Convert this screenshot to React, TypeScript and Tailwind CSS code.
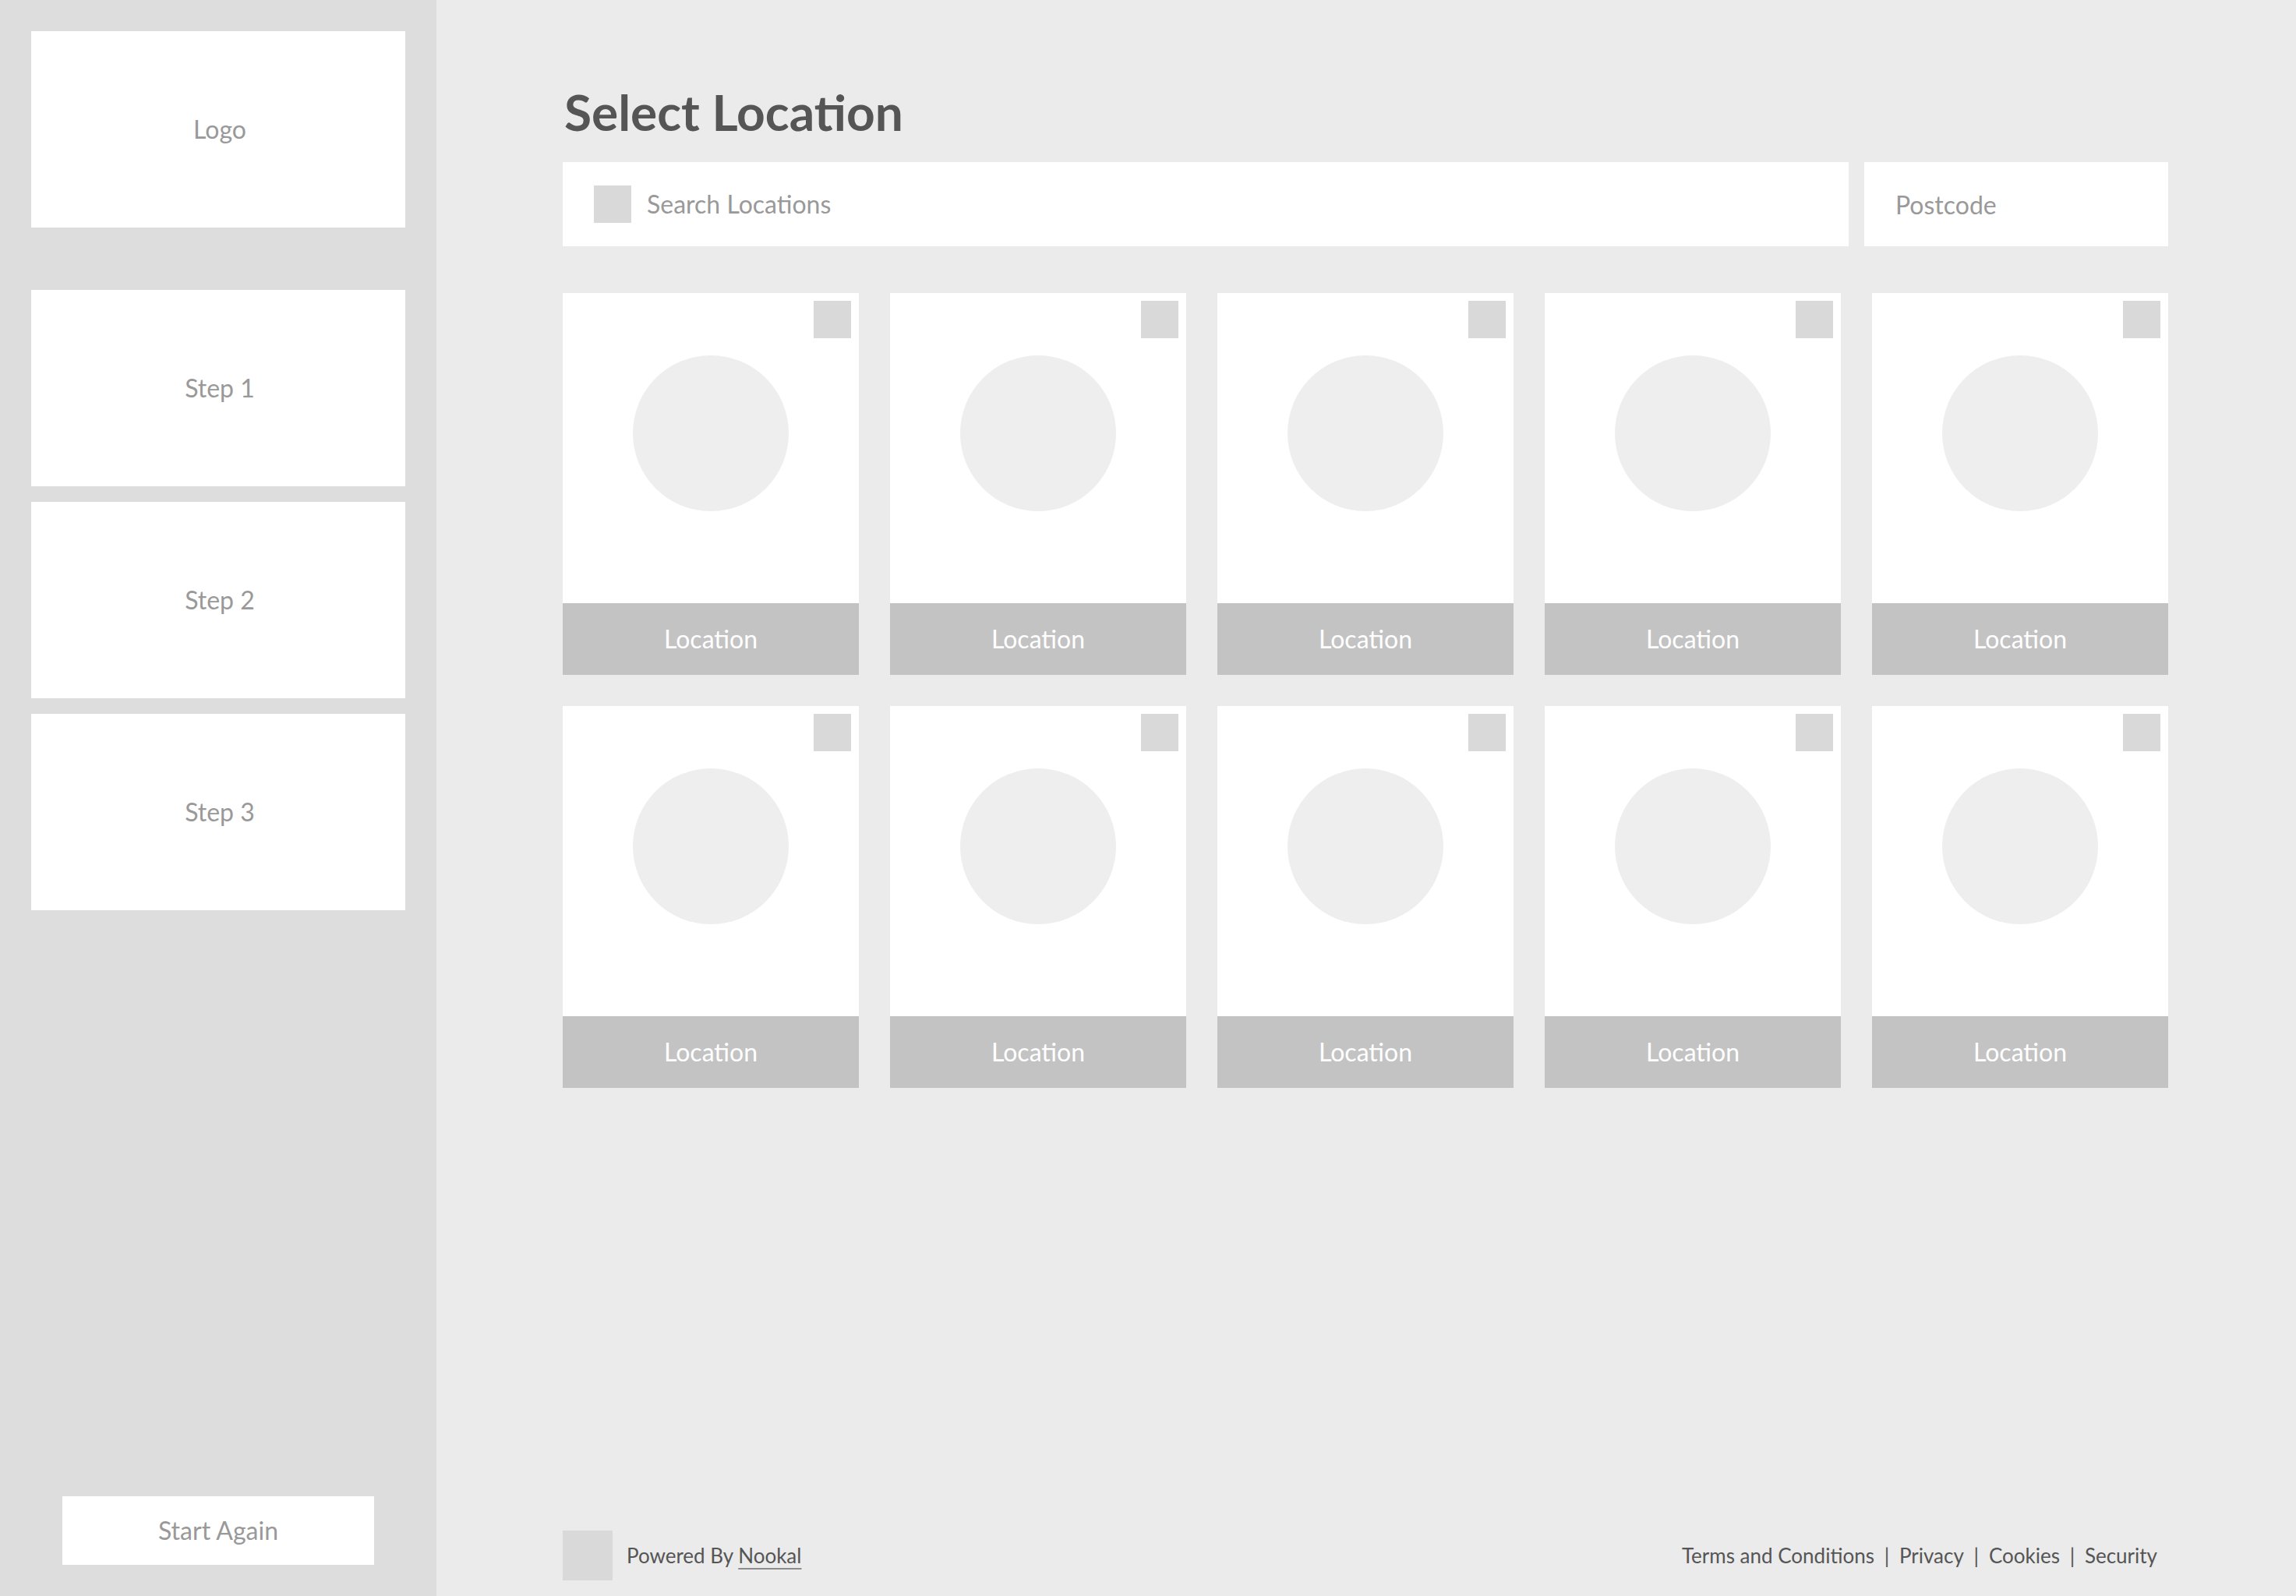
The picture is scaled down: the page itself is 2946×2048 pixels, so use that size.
const steps = ["Step 1", "Step 2", "Step 3"];
const locations = Array.from({ length: 10 }, (_, i) => ({ id: i + 1, name: "Location" }));
const links = ["Terms and Conditions", "Privacy", "Cookies", "Security"];

function Sidebar() {
  return (
    <aside className="flex w-[560px] shrink-0 flex-col bg-[#dddddd] p-10 text-[32px] leading-10 text-[#999999]">
      <div className="flex h-[252px] items-center justify-center bg-white pl-1">Logo</div>
      <nav aria-label="Steps" className="mt-20">
        <ol className="flex flex-col gap-5">
          {steps.map((step) => (
            <li key={step}>
              <button type="button" className="flex h-[252px] w-full items-center justify-center bg-white pl-1">
                {step}
              </button>
            </li>
          ))}
        </ol>
      </nav>
      <button type="button" className="mx-10 mt-auto flex h-[88px] items-center justify-center bg-white">
        Start Again
      </button>
    </aside>
  );
}

function SearchBar() {
  return (
    <form role="search" className="flex gap-5 text-[32px] leading-10" onSubmit={(e) => e.preventDefault()}>
      <label className="flex h-[108px] min-w-0 flex-1 items-center gap-5 bg-white px-10">
        <span className="size-12 shrink-0 bg-[#d9d9d9]" aria-hidden="true" />
        <input
          type="search"
          aria-label="Search Locations"
          placeholder="Search Locations"
          className="min-w-0 flex-1 bg-transparent text-[#555555] outline-none placeholder:text-[#999999] placeholder:opacity-100"
        />
      </label>
      <input
        type="text"
        aria-label="Postcode"
        placeholder="Postcode"
        className="h-[108px] w-[390px] bg-white px-10 text-[#555555] outline-none placeholder:text-[#999999] placeholder:opacity-100"
      />
    </form>
  );
}

function LocationCard({ name }: { name: string }) {
  return (
    <button type="button" className="flex w-full flex-col bg-white text-[32px] leading-10 text-white">
      <span className="flex w-full justify-end p-2.5">
        <span className="size-12 bg-[#d9d9d9]" />
      </span>
      <span className="mx-auto mt-3 mb-[118px] size-[200px] rounded-full bg-[#eeeeee]" />
      <span className="flex h-[92px] w-full items-center justify-center bg-[#c3c3c3]">{name}</span>
    </button>
  );
}

function Footer() {
  return (
    <footer className="mt-auto flex items-center justify-between text-[26px] leading-8 text-[#555555]">
      <div className="flex items-center gap-[18px]">
        <span className="size-16 bg-[#d9d9d9]" aria-hidden="true" />
        <p>
          Powered By{" "}
          <a href="#nookal" className="underline decoration-[#8c8c8c] decoration-2 underline-offset-[6px]">
            Nookal
          </a>
        </p>
      </div>
      <ul className="flex pr-3.5">
        {links.map((link, i) => (
          <li key={link} className="flex">
            {i > 0 && (
              <span className="w-8 text-center" aria-hidden="true">
                |
              </span>
            )}
            <a href="#legal">{link}</a>
          </li>
        ))}
      </ul>
    </footer>
  );
}

export default function App() {
  return (
    <div className="flex min-h-screen bg-[#ebebeb] font-[Lato,sans-serif]">
      <Sidebar />
      <main className="flex min-w-0 flex-1 flex-col pt-[104px] pr-[164px] pb-5 pl-[162px]">
        <h1 className="mb-6 px-0.5 text-[64px] leading-20 font-bold text-[#555555]">Select Location</h1>
        <SearchBar />
        <ul className="mt-[60px] grid grid-cols-5 gap-10">
          {locations.map((location) => (
            <li key={location.id}>
              <LocationCard name={location.name} />
            </li>
          ))}
        </ul>
        <Footer />
      </main>
    </div>
  );
}
